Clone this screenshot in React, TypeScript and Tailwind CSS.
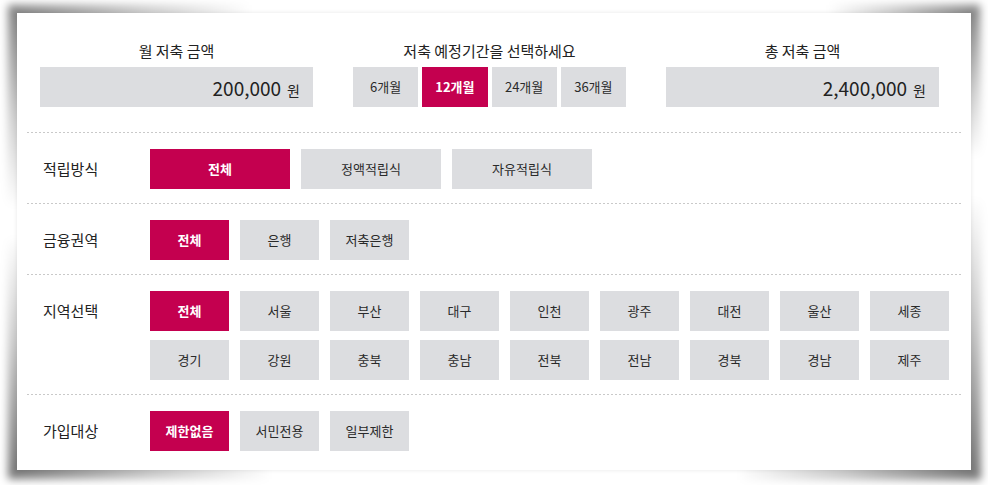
import React from "react";

const FONT = "font-['Noto_Sans_CJK_KR','Noto_Sans',sans-serif]";

function Divider() {
  return (
    <div className="h-px w-full bg-[linear-gradient(to_right,#c9c9c9_50%,transparent_50%)] bg-[length:4px_1px] bg-repeat-x" />
  );
}

function Btn({ label, active, w }: { label: string; active?: boolean; w: string }) {
  return (
    <div
      className={`${w} flex h-[40px] items-center justify-center text-[13px] ${
        active ? "bg-[#c4004f] font-bold text-white" : "bg-[#dcdde0] text-[#2a2a2a]"
      }`}
    >
      {label}
    </div>
  );
}

function Row({ label, children }: { label: string; children: React.ReactNode }) {
  return (
    <div className="flex pl-[16px] pt-[16px] pb-[14px]">
      <div className="h-[40px] w-[107px] shrink-0 text-[15px] leading-[40px] text-[#222]">{label}</div>
      <div className="flex flex-1 flex-wrap gap-x-[11px] gap-y-[9px]">{children}</div>
    </div>
  );
}

export default function App() {
  const regions = [
    "전체", "서울", "부산", "대구", "인천", "광주", "대전", "울산", "세종",
    "경기", "강원", "충북", "충남", "전북", "전남", "경북", "경남", "제주",
  ];
  return (
    <div className={`relative h-[485px] w-[988px] overflow-hidden bg-white pl-[17px] pt-[13px] ${FONT}`}>
      {/* paper corner shadows */}
      <div className="absolute left-[8px] top-[5px] h-[200px] w-[240px] bg-[radial-gradient(ellipse_at_top_left,rgba(0,0,0,0.5),rgba(0,0,0,0.2)_40%,transparent_72%)] blur-[4px]" />
      <div className="absolute right-[8px] top-[5px] h-[150px] w-[150px] bg-[radial-gradient(ellipse_at_top_right,rgba(0,0,0,0.5),rgba(0,0,0,0.2)_40%,transparent_72%)] blur-[4px]" />
      <div className="absolute bottom-[6px] left-[8px] h-[240px] w-[260px] bg-[radial-gradient(ellipse_at_bottom_left,rgba(0,0,0,0.55),rgba(0,0,0,0.22)_40%,transparent_72%)] blur-[4px]" />
      <div className="absolute bottom-[5px] right-[7px] h-[280px] w-[240px] bg-[radial-gradient(ellipse_at_bottom_right,rgba(0,0,0,0.55),rgba(0,0,0,0.22)_40%,transparent_72%)] blur-[4px]" />

      <div className="relative z-10 h-[457px] w-[954px] bg-white pl-[10px] pr-[8px] shadow-[0_0_4px_rgba(0,0,0,0.1)]">
        {/* top section */}
        <div className="flex gap-[40px] pb-[25px] pl-[13px] pt-[26px]">
          <div className="w-[273px]">
            <div className="h-[24px] text-center text-[15px] leading-[24px] text-[#222]">월 저축 금액</div>
            <div className="mt-[4px] flex h-[40px] items-baseline justify-end bg-[#dcdde0] pr-[13px] pt-[7px] text-[#222]">
              <span className="text-[19px]">200,000</span>
              <span className="ml-[6px] text-[14px]">원</span>
            </div>
          </div>
          <div className="w-[273px]">
            <div className="h-[24px] text-center text-[15px] leading-[24px] text-[#222]">저축 예정기간을 선택하세요</div>
            <div className="mt-[4px] grid grid-cols-4 gap-[4px]">
              <Btn label="6개월" w="w-full" />
              <Btn label="12개월" w="w-full" active />
              <Btn label="24개월" w="w-full" />
              <Btn label="36개월" w="w-full" />
            </div>
          </div>
          <div className="w-[273px]">
            <div className="h-[24px] text-center text-[15px] leading-[24px] text-[#222]">총 저축 금액</div>
            <div className="mt-[4px] flex h-[40px] items-baseline justify-end bg-[#dcdde0] pr-[13px] pt-[7px] text-[#222]">
              <span className="text-[19px]">2,400,000</span>
              <span className="ml-[6px] text-[14px]">원</span>
            </div>
          </div>
        </div>

        <Divider />
        <Row label="적립방식">
          <Btn label="전체" w="w-[140px]" active />
          <Btn label="정액적립식" w="w-[140px]" />
          <Btn label="자유적립식" w="w-[140px]" />
        </Row>
        <Divider />
        <Row label="금융권역">
          <Btn label="전체" w="w-[79px]" active />
          <Btn label="은행" w="w-[79px]" />
          <Btn label="저축은행" w="w-[79px]" />
        </Row>
        <Divider />
        <Row label="지역선택">
          {regions.map((r, i) => (
            <Btn key={r} label={r} w="w-[79px]" active={i === 0} />
          ))}
        </Row>
        <Divider />
        <Row label="가입대상">
          <Btn label="제한없음" w="w-[79px]" active />
          <Btn label="서민전용" w="w-[79px]" />
          <Btn label="일부제한" w="w-[79px]" />
        </Row>
      </div>
    </div>
  );
}
